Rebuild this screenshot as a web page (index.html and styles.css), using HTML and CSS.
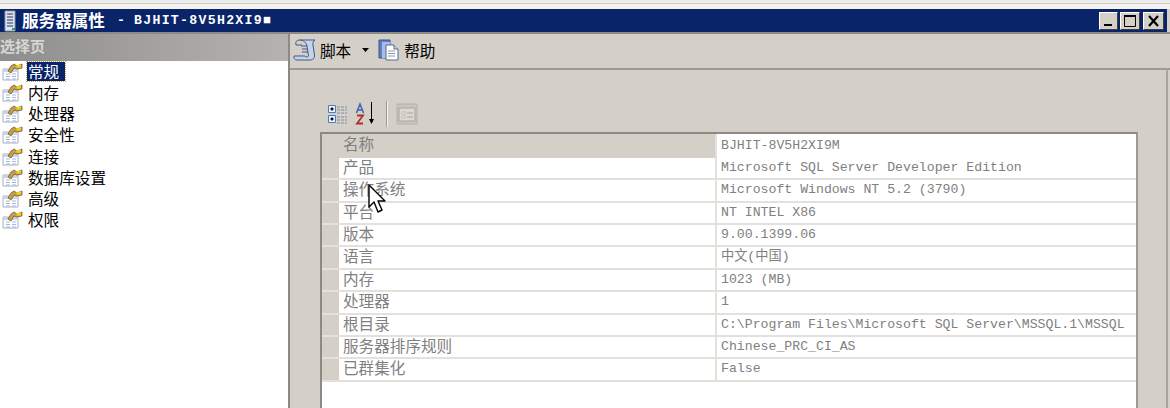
FILE: index.html
```html
<!DOCTYPE html>
<html lang="zh">
<head>
<meta charset="utf-8">
<title>服务器属性</title>
<link rel="stylesheet" href="styles.css">
</head>
<body>
<svg class="defs" width="0" height="0">
  <symbol id="page" viewBox="0 0 22 20">
    <path d="M2 7h15v11H2z" fill="#fff" stroke="#a5aec2"/>
    <path d="M2.500 7.500h14v2.500h-14z" fill="#c9d3ea"/>
    <path d="M5 12h4M11 12h4M5 14.500h4M11 14.500h4M5 17h4M11 17h4" stroke="#a7b5dc"/>
    <path d="M7 9l3-5 3-2 3 2 5-2v4l-5 1-3-1-3 5z" fill="#c9a03a" stroke="#5e5230" stroke-width=".7"/>
    <path d="M15 3.500l5-1.300v3l-4 .8z" fill="#f2cf1d"/>
  </symbol>
</svg>

<div class="top-strip"></div>
<header class="titlebar">
  <svg class="app-icon" width="14" height="22" viewBox="0 0 14 22">
    <path d="M2 1h10v20H2z" fill="#dfe3ea" stroke="#8a94a8"/>
    <path d="M4 4h6M4 7h6M4 10h6M4 13h6M4 16h6" stroke="#5b6f95" stroke-width="1.500"/>
    <path d="M9 18h3v2H9z" fill="#3c9a50"/>
  </svg>
  <span class="title-cn">服务器属性</span>
  <span class="title-dash">-</span>
  <span class="title-host">BJHIT-8V5H2XI9■</span>
  <div class="win-btns">
    <div class="win-btn"><svg width="17" height="16" viewBox="0 0 17 16"><path d="M4 11h8v2H4z" fill="#000"/></svg></div>
    <div class="win-btn wide"><svg width="18" height="16" viewBox="0 0 18 16"><path d="M3.500 2.500h11v11h-11z" fill="none" stroke="#000"/><path d="M3 2h12v2H3z" fill="#000"/></svg></div>
    <div class="win-btn close"><svg width="19" height="16" viewBox="0 0 19 16"><path d="M5 3l9 10M14 3l-9 10" stroke="#000" stroke-width="2.200"/></svg></div>
  </div>
</header>
<div class="titlebar-rule"></div>

<main class="dialog">
  <aside class="side">
    <div class="side-head">选择页</div>
    <ul class="nav">
      <li class="nav-item"><svg class="nav-icon"><use href="#page"/></svg><span class="nav-label selected">常规</span></li>
      <li class="nav-item"><svg class="nav-icon"><use href="#page"/></svg><span class="nav-label">内存</span></li>
      <li class="nav-item"><svg class="nav-icon"><use href="#page"/></svg><span class="nav-label">处理器</span></li>
      <li class="nav-item"><svg class="nav-icon"><use href="#page"/></svg><span class="nav-label">安全性</span></li>
      <li class="nav-item"><svg class="nav-icon"><use href="#page"/></svg><span class="nav-label">连接</span></li>
      <li class="nav-item"><svg class="nav-icon"><use href="#page"/></svg><span class="nav-label">数据库设置</span></li>
      <li class="nav-item"><svg class="nav-icon"><use href="#page"/></svg><span class="nav-label">高级</span></li>
      <li class="nav-item"><svg class="nav-icon"><use href="#page"/></svg><span class="nav-label">权限</span></li>
    </ul>
  </aside>

  <section class="content">
    <div class="toolbar">
      <svg class="tool-icon" width="24" height="24" viewBox="0 0 24 24">
        <path d="M7 2h15c-2 1-2.500 3-2 5l1.500 10c.3 3-1.500 5-4 5H4c-2 0-3.500-1.500-3-4h11c1 1.500 2.500 1.500 3.500 0L14 8c-.5-3-3.500-6-7-6z" fill="#c6d4ea" stroke="#3f5a8c"/>
        <path d="M7 2c-3 0-5 1.500-4 5h6M8 8h6M9 11h6M9 14h6" fill="none" stroke="#3f5a8c"/>
      </svg>
      <span class="tool-text">脚本</span>
      <svg class="caret" width="7" height="4" viewBox="0 0 7 4"><path d="M0 0h7L3.500 4z" fill="#000"/></svg>
      <svg class="tool-icon help-icon" width="22" height="22" viewBox="0 0 22 22">
        <path d="M1 1h11v18H1z" fill="#5f7fc4" stroke="#3c5590"/>
        <path d="M4 3h8v16H4z" fill="#a9bde6"/>
        <path d="M8 6h8l4 4v11H8z" fill="#fff" stroke="#53688f"/>
        <path d="M16 6v4h4" fill="#d5dcea" stroke="#53688f"/>
        <path d="M10 12h7M10 14.500h7M10 17h7" stroke="#8a94a8"/>
      </svg>
      <span class="tool-text">帮助</span>
    </div>

    <div class="pane">
      <div class="grid-tools">
        <svg width="24" height="24" viewBox="0 0 24 24">
          <path d="M2.500 3.500h7v7h-7zM2.500 13.500h7v7h-7z" fill="#eaf1fb" stroke="#4a7cc4"/>
          <path d="M4.500 7h3M6 5.500v3M4.500 17h3M6 15.500v3" stroke="#000" stroke-width="1.500"/>
          <path d="M11 5h10M11 8h10M11 11h10M11 15h10M11 18h10M11 21h10" stroke="#7f8da8" stroke-dasharray="3 1"/>
        </svg>
        <svg class="sort-icon" width="22" height="24" viewBox="0 0 22 24">
          <path d="M1.500 11L5 2l3.500 9M3 8h4" fill="none" stroke="#3a62b8" stroke-width="1.500"/>
          <path d="M2 13.500h6L2 21.500h6" fill="none" stroke="#b03030" stroke-width="1.800"/>
          <path d="M16.500 0v20" stroke="#000"/>
          <path d="M14 17h5l-2.500 5z" fill="#000"/>
        </svg>
        <div class="tool-sep"></div>
        <svg width="22" height="22" viewBox="0 0 22 22">
          <path d="M1 1h20v20H1z" fill="#c8c5bd" stroke="#b5b2aa"/>
          <path d="M3 5h16v13H3z" fill="#dcd9d2" stroke="#a9a69e"/>
          <path d="M6 9h3v2H6zM6 13h3v2H6z" fill="#fff" stroke="#a9a69e" stroke-width=".7"/>
          <path d="M11 10h6M11 14h6" stroke="#a9a69e"/>
        </svg>
      </div>

      <div class="grid-box">
        <div class="row head"><div class="k">名称</div><div class="v">BJHIT-8V5H2XI9M</div></div>
        <div class="row"><div class="k">产品</div><div class="v">Microsoft SQL Server Developer Edition</div></div>
        <div class="row"><div class="k">操作系统</div><div class="v">Microsoft Windows NT 5.2 (3790)</div></div>
        <div class="row"><div class="k">平台</div><div class="v">NT INTEL X86</div></div>
        <div class="row"><div class="k">版本</div><div class="v">9.00.1399.06</div></div>
        <div class="row"><div class="k">语言</div><div class="v">中文(中国)</div></div>
        <div class="row"><div class="k">内存</div><div class="v">1023 (MB)</div></div>
        <div class="row"><div class="k">处理器</div><div class="v">1</div></div>
        <div class="row"><div class="k">根目录</div><div class="v">C:\Program Files\Microsoft SQL Server\MSSQL.1\MSSQL</div></div>
        <div class="row"><div class="k">服务器排序规则</div><div class="v">Chinese_PRC_CI_AS</div></div>
        <div class="row"><div class="k">已群集化</div><div class="v">False</div></div>
      </div>
    </div>
    <div class="edge-rule"></div>
  </section>
</main>

<svg class="cursor" width="18" height="29" viewBox="0 0 18 29">
  <path d="M1 1v22l5-5 4 10 4-2-4-9h7z" fill="#fff" stroke="#000" stroke-width="1.400" stroke-linejoin="round"/>
</svg>
</body>
</html>
```
FILE: styles.css
```css
* { box-sizing: border-box; }
html, body { margin: 0; height: 408px; overflow: hidden; background: #d4d0c8; }
body { position: relative; font-family: "Noto Sans CJK SC", "Liberation Sans", sans-serif; font-size: 15.6px; color: #000; }
.defs { position: absolute; }

.top-strip { height: 9px; background: linear-gradient(#ececec 0 3px, #cfcdc8 3px 4px, #f4f3f0 4px); }
.titlebar { height: 23px; margin-right: 3px; background: #0a246a; color: #fff; display: flex; align-items: center; padding-left: 3px; }
.app-icon { flex: none; }
.title-cn { margin-left: 5px; width: 84px; font-weight: 700; font-size: 16.6px; white-space: nowrap; line-height: 23px; }
.title-dash, .title-host { font-family: "Liberation Mono", monospace; font-weight: 700; font-size: 13.2px; }
.title-dash { margin-left: 11px; width: 17px; }
.title-host { letter-spacing: 1.3px; }
.win-btns { margin-left: auto; display: flex; gap: 2px; padding-right: 3px; }
.win-btn { width: 19px; height: 18px; background: #d4d0c8; border: 1px solid; border-color: #fff #404040 #404040 #fff; display: flex; }
.win-btn.wide { width: 20px; }
.win-btn.close { width: 21px; margin-left: 1px; }
.titlebar-rule { height: 2px; background: #8c8a85; }

.dialog { display: flex; height: 374px; }
.side { width: 288px; flex: none; background: #fff; }
.side-head { height: 27px; background: linear-gradient(90deg, #8e8e8e, #b5b3b0); color: #d8d6d0; font-weight: 700; font-size: 15px; line-height: 24px; }
.nav { list-style: none; margin: 0; padding: 0; }
.nav-item { height: 21.150px; display: flex; align-items: center; }
.nav-icon { width: 22px; height: 20px; margin-left: 1px; margin-top: 1px; flex: none; }
.nav-label { margin-left: 4px; padding: 0 1px; line-height: 17px; white-space: nowrap; }
.nav-label.selected { background: #0a246a; color: #fff; padding: 1px 6px 1px 1px; outline: 1px dotted #c9a94a; }

.content { flex: 1; border-left: 2px solid #8c8a85; position: relative; }
.toolbar { height: 36px; border-bottom: 2px solid #9c9a94; display: flex; align-items: center; padding-left: 3px; padding-bottom: 3px; }
.tool-text { margin-left: 3px; line-height: 20px; }
.caret { margin-left: 11px; flex: none; }
.help-icon { margin-left: 9px; }
.tool-icon { flex: none; }
.help-icon + .tool-text { margin-left: 4px; }

.pane { padding: 29px 32px 0 30px; }
.grid-tools { height: 33px; display: flex; align-items: center; gap: 2px; padding-left: 6px; padding-bottom: 3px; }
.sort-icon { margin-left: 3px; }
.tool-sep { width: 2px; height: 26px; background: #f4f3f0; border-left: 1px solid #9c9a94; margin: 0 6px 0 7px; }

.grid-box { height: 276px; overflow: hidden; background: #fff; border: 2px solid #8c8a85; border-right-color: #9c9a94; border-bottom: 0; }
.row { display: grid; grid-template-columns: 378px 1fr; height: 22.360px; padding-left: 17px; background: linear-gradient(90deg, #d4d0c8 17px, #fff 17px); border-bottom: 2px solid #e4e1db; color: #808080; }
.row.head { height: 24px; border-bottom: 0; }
.row.head .k { background: #d4d0c8; padding-top: 1px; }
.row.head .v { padding-top: 2px; }
.k { padding-left: 4px; line-height: 16px; white-space: nowrap; border-right: 2px solid #e4e1db; }
.v { padding-left: 4px; font-family: "Liberation Mono", "Noto Sans CJK SC", monospace; font-size: 13.2px; line-height: 20px; white-space: nowrap; overflow: hidden; }
.edge-rule { position: absolute; top: 35px; bottom: 0; right: 2px; width: 2px; background: #a8a59e; }

.cursor { position: absolute; left: 368px; top: 184px; }
```
